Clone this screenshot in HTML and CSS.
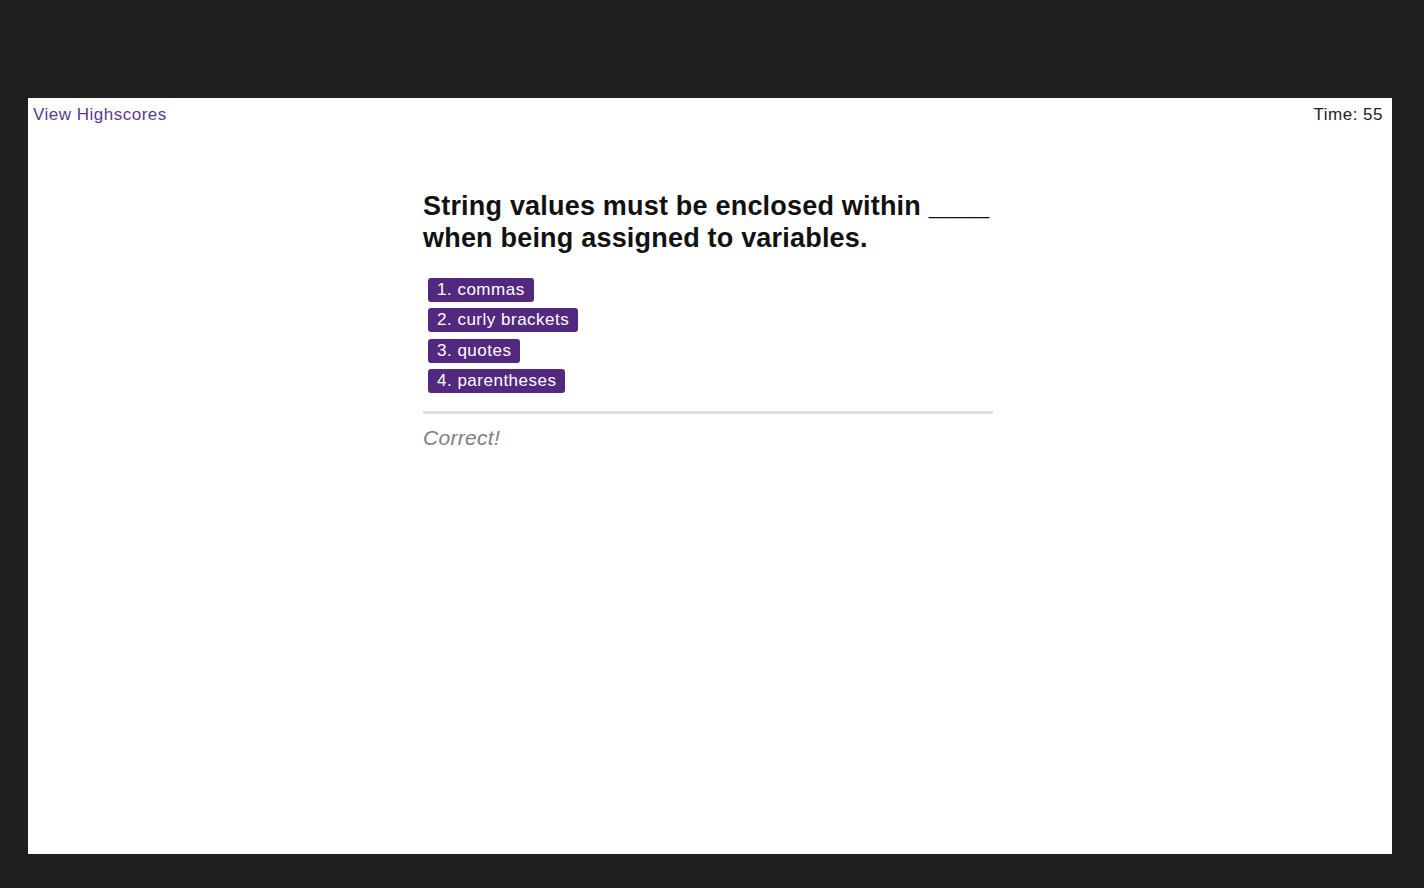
FILE: index.html
```html
<!DOCTYPE html>
<html>
<head>
<meta charset="utf-8">
<link rel="stylesheet" href="styles.css">
</head>
<body>
<div class="screen">
  <div class="page">
    <header class="topbar">
      <a class="highscores">View Highscores</a>
      <span class="timer">Time: 55</span>
    </header>
    <main class="quiz">
      <h2 class="question">String values must be enclosed within ____ when being assigned to variables.</h2>
      <div class="choices">
        <button class="choice">1. commas</button>
        <button class="choice">2. curly brackets</button>
        <button class="choice">3. quotes</button>
        <button class="choice">4. parentheses</button>
      </div>
      <div class="feedback">Correct!</div>
    </main>
  </div>
</div>
</body>
</html>
```
FILE: styles.css
```css
html, body {
  margin: 0;
  padding: 0;
  background: #1f1f1f;
  font-family: "Liberation Sans", Arial, sans-serif;
}
.screen {
  width: 1424px;
  height: 888px;
  padding: 98px 32px 34px 28px;
  box-sizing: border-box;
}
.page {
  background: #ffffff;
  height: 756px;
  width: 1364px;
  display: flex;
  flex-direction: column;
}
.topbar {
  display: flex;
  justify-content: space-between;
  align-items: center;
  padding: 7px 9px 0 5px;
  height: 20px;
  font-size: 17px;
  letter-spacing: 0.5px;
}
.highscores {
  color: #5b3a8e;
}
.timer {
  color: #222;
}
.quiz {
  width: 570px;
  margin-left: 395px;
}
.question {
  margin: 65px 0 24px;
  font-size: 27px;
  line-height: 32px;
  font-weight: bold;
  color: #111;
  letter-spacing: 0.2px;
}
.choices {
  display: flex;
  flex-direction: column;
  align-items: flex-start;
  gap: 6.4px;
  padding-left: 5px;
}
.choice {
  background: #52297f;
  color: #fff;
  border: none;
  border-radius: 3px;
  font-family: "Liberation Sans", Arial, sans-serif;
  font-size: 17px;
  letter-spacing: 0.5px;
  height: 24px;
  padding: 0 9px 0 9px;
  line-height: 24px;
}
.feedback {
  margin-top: 18px;
  border-top: 3px solid #dedede;
  padding-top: 12px;
  font-size: 21px;
  font-style: italic;
  color: #808080;
  letter-spacing: 0.3px;
}
```
